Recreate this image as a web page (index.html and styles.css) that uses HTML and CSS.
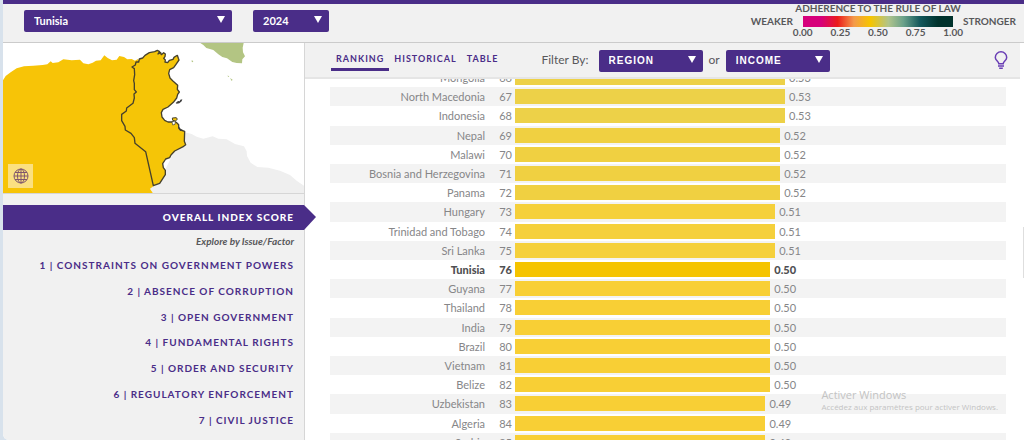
FILE: index.html
```html
<!DOCTYPE html>
<html lang="en">
<head>
<meta charset="utf-8">
<title>Rule of Law Index – Tunisia</title>
<link rel="stylesheet" href="styles.css">
</head>
<body>
<div class="app">
  <header class="topbar">
    <div class="pickers">
      <div class="select select-country"><select aria-label="Country"><option>Tunisia</option></select></div>
      <div class="select select-year"><select aria-label="Year"><option>2024</option></select></div>
    </div>
    <div class="legend">
      <span class="legend-end">WEAKER</span>
      <div class="legend-scale">
        <div class="legend-title">ADHERENCE TO THE RULE OF LAW</div>
        <div class="legend-bar"></div>
        <div class="legend-ticks"><span>0.00</span><span>0.25</span><span>0.50</span><span>0.75</span><span>1.00</span></div>
      </div>
      <span class="legend-end">STRONGER</span>
    </div>
  </header>

  <div class="body">
    <aside class="sidebar">
      <div class="map">
        <svg class="map-svg" viewBox="9 9 903 450" preserveAspectRatio="xMidYMid slice" role="img" aria-label="Map of Tunisia">
          <path fill="#efefef" d="M552 276L575 282L590 290L610 296L638 289L655 296L680 298L705 312L732 319L740 334L741 348L752 368L772 381L805 383L840 392L870 405L890 422L912 437V460H459L450 445L460 437L490 400Z"/>
          <path fill="#f7c407" d="M9 121L17 108L32 97L50 85L72 79L100 77L128 75L142 73L152 64L158 69L175 67L190 58L215 61L240 59L250 70L265 73L278 68L288 62L302 61L313 46L323 54L336 61L350 59L358 48L372 51L382 58L395 57L405 62L414 57L425 80L440 320L462 437L450 446L459 460H9Z"/>
          <path fill="#f5c507" stroke="#46412c" stroke-width="4" stroke-linejoin="round" d="M396 81L406 75L408 66L416 66L418 57L428 54L435 46L448 38L464 35L472 31L479 35L474 42L482 38L484 44L491 38L496 42L495 50L491 55L496 60L495 66L503 68L508 61L519 58L522 52L528 48L532 46L535 55L537 60L528 73L521 83L509 89L506 100L510 114L518 122L528 131L533 136L532 148L538 156L533 163L530 174L520 187L504 201L489 208L484 218L486 231L494 241L504 246L515 246L524 244L531 249L536 254L536 263L542 270L554 274L553 304L557 314L551 319L524 333L513 345L509 353L497 357L488 371L490 383L496 391V404L479 430L460 437L437 335L405 310L403 293L393 280L376 270L375 259L365 242V223L379 213L380 204L399 190L403 174L402 162L409 156L403 149V130L401 122L404 104L403 86Z"/>
          <path fill="#f5c507" stroke="#46412c" stroke-width="3" d="M517 234L529 233L532 238L526 243L518 241Z"/>
          <path fill="#fff" stroke="#46412c" stroke-width="2" d="M516 245L526 243L525 253L518 255Z"/>
          <path fill="#3e3e3e" d="M527 189L534 183L539 184L541 179L547 178L545 184L538 190L530 191ZM536 258L541 266L550 271L541 273L535 266Z"/>
          <path fill="#b3c583" d="M601 9H731L728 23L729 37L735 49L727 58L726 70L710 69L697 66L681 55L667 51L655 43L640 30L619 24L610 15ZM575 61L580 63L578 67L575 65ZM683 106L688 110L684 111ZM690 114L698 119L695 123Z"/>
        </svg>
        <button class="globe" type="button" aria-label="World view">
          <svg viewBox="0 0 16 16" width="16" height="16" fill="none" stroke="#80566d" stroke-width="1">
            <circle cx="8" cy="8" r="7"/><ellipse cx="8" cy="8" rx="3.5" ry="7"/><path d="M8 1V15M1 8H15M2 4.5H14M2 11.5H14"/>
          </svg>
        </button>
      </div>
      <nav class="factors">
        <a class="overall" href="#overall">OVERALL INDEX SCORE</a>
        <p class="hint">Explore by Issue/Factor</p>
        <div class="factor-list">
          <a class="factor" href="#f1">1 | CONSTRAINTS ON GOVERNMENT POWERS</a>
          <a class="factor" href="#f2">2 | ABSENCE OF CORRUPTION</a>
          <a class="factor" href="#f3">3 | OPEN GOVERNMENT</a>
          <a class="factor" href="#f4">4 | FUNDAMENTAL RIGHTS</a>
          <a class="factor" href="#f5">5 | ORDER AND SECURITY</a>
          <a class="factor" href="#f6">6 | REGULATORY ENFORCEMENT</a>
          <a class="factor" href="#f7">7 | CIVIL JUSTICE</a>
        </div>
      </nav>
    </aside>

    <main class="content">
      <div class="toolbar">
        <nav class="tabs">
          <a class="tab tab-active" href="#ranking">RANKING</a>
          <a class="tab" href="#historical">HISTORICAL</a>
          <a class="tab" href="#table">TABLE</a>
        </nav>
        <div class="filters">
          <span class="filter-label">Filter By:</span>
          <div class="select select-filter"><select aria-label="Region"><option>REGION</option></select></div>
          <span class="filter-or">or</span>
          <div class="select select-filter"><select aria-label="Income"><option>INCOME</option></select></div>
        </div>
        <button class="tips" type="button" aria-label="Insights">
          <svg viewBox="0 0 14 18" width="14" height="18" fill="none" stroke="#6a3fb5" stroke-width="1.5">
            <path d="M4.8 12.8C4.8 10.5 1.3 9.5 1.3 6.5A5.7 5.7 0 0 1 12.7 6.5C12.7 9.5 9.2 10.5 9.2 12.8ZM4 15H10M5.2 17.2H8.8"/>
          </svg>
        </button>
      </div>
      <div class="viewport">
        <ol class="ranking">
          <li class="row"><span class="name">Mongolia</span><span class="rank">66</span><span class="track"><span class="bar s53" style="width:55%"></span><span>0.53</span></span></li>
          <li class="row"><span class="name">North Macedonia</span><span class="rank">67</span><span class="track"><span class="bar s53" style="width:55%"></span><span>0.53</span></span></li>
          <li class="row"><span class="name">Indonesia</span><span class="rank">68</span><span class="track"><span class="bar s53" style="width:55%"></span><span>0.53</span></span></li>
          <li class="row"><span class="name">Nepal</span><span class="rank">69</span><span class="track"><span class="bar s52" style="width:54%"></span><span>0.52</span></span></li>
          <li class="row"><span class="name">Malawi</span><span class="rank">70</span><span class="track"><span class="bar s52" style="width:54%"></span><span>0.52</span></span></li>
          <li class="row"><span class="name">Bosnia and Herzegovina</span><span class="rank">71</span><span class="track"><span class="bar s52" style="width:54%"></span><span>0.52</span></span></li>
          <li class="row"><span class="name">Panama</span><span class="rank">72</span><span class="track"><span class="bar s52" style="width:54%"></span><span>0.52</span></span></li>
          <li class="row"><span class="name">Hungary</span><span class="rank">73</span><span class="track"><span class="bar s51" style="width:53%"></span><span>0.51</span></span></li>
          <li class="row"><span class="name">Trinidad and Tobago</span><span class="rank">74</span><span class="track"><span class="bar s51" style="width:53%"></span><span>0.51</span></span></li>
          <li class="row"><span class="name">Sri Lanka</span><span class="rank">75</span><span class="track"><span class="bar s51" style="width:53%"></span><span>0.51</span></span></li>
          <li class="row row-current"><span class="name">Tunisia</span><span class="rank">76</span><span class="track"><span class="bar" style="width:52%"></span><span>0.50</span></span></li>
          <li class="row"><span class="name">Guyana</span><span class="rank">77</span><span class="track"><span class="bar" style="width:52%"></span><span>0.50</span></span></li>
          <li class="row"><span class="name">Thailand</span><span class="rank">78</span><span class="track"><span class="bar" style="width:52%"></span><span>0.50</span></span></li>
          <li class="row"><span class="name">India</span><span class="rank">79</span><span class="track"><span class="bar" style="width:52%"></span><span>0.50</span></span></li>
          <li class="row"><span class="name">Brazil</span><span class="rank">80</span><span class="track"><span class="bar" style="width:52%"></span><span>0.50</span></span></li>
          <li class="row"><span class="name">Vietnam</span><span class="rank">81</span><span class="track"><span class="bar" style="width:52%"></span><span>0.50</span></span></li>
          <li class="row"><span class="name">Belize</span><span class="rank">82</span><span class="track"><span class="bar" style="width:52%"></span><span>0.50</span></span></li>
          <li class="row"><span class="name">Uzbekistan</span><span class="rank">83</span><span class="track"><span class="bar" style="width:51%"></span><span>0.49</span></span></li>
          <li class="row"><span class="name">Algeria</span><span class="rank">84</span><span class="track"><span class="bar" style="width:51%"></span><span>0.49</span></span></li>
          <li class="row"><span class="name">Serbia</span><span class="rank">85</span><span class="track"><span class="bar" style="width:51%"></span><span>0.49</span></span></li>
        </ol>
      </div>
    </main>
  </div>
  <div class="watermark">
    <div class="watermark-title">Activer Windows</div>
    <div class="watermark-text">Accédez aux paramètres pour activer Windows.</div>
  </div>
  <div class="scroll-thumb"></div>
</div>
</body>
</html>
```
FILE: styles.css
```css
* {
  box-sizing: border-box;
}

body {
  margin: 0;
  background: #d8e2ec;
  color: #58585b;
  font-family: Lato, "Liberation Sans", sans-serif;
}

a {
  color: inherit;
  text-decoration: none;
}

button {
  padding: 0;
  border: 0;
  background: none;
}

.app {
  position: relative;
  display: flex;
  flex-direction: column;
  height: 100vh;
  margin-left: 3px;
  overflow: hidden;
  border-radius: 0 0 0 6px;
  background: #fff;
}

/* Top bar */
.topbar {
  display: flex;
  flex: none;
  justify-content: space-between;
  height: 43px;
  padding: 0 8px 0 21px;
  border-top: 4px solid #4a2d88;
  border-bottom: 1px solid #cbcbcb;
  background: #f1f1f1;
}

.pickers {
  display: flex;
  gap: 21px;
  padding-top: 5px;
}

.select {
  position: relative;
  height: 22px;
}

.select::after {
  content: "";
  position: absolute;
  top: 7px;
  right: 7px;
  border: solid transparent;
  border-width: 7px 4px 0;
  border-top-color: #fff;
  pointer-events: none;
}

.select select {
  width: 100%;
  height: 100%;
  padding: 0 10px;
  appearance: none;
  border: 0;
  border-radius: 2px;
  background: #4a2d88;
  color: #fff;
  font: 700 11px Lato, sans-serif;
}

.select-country {
  width: 208px;
}

.select-year {
  width: 76px;
}

.select-filter {
  width: 104px;
}

.select-filter select {
  font: 700 10px "Liberation Sans", sans-serif;
  letter-spacing: 1px;
}

.legend {
  display: flex;
  gap: 10px;
  font-size: 10px;
  font-weight: 700;
  line-height: 10px;
}

.legend-end {
  padding-top: 12px;
}

.legend-scale {
  width: 150px;
}

.legend-title {
  display: flex;
  justify-content: center;
  height: 12px;
  line-height: 8px;
  white-space: nowrap;
}

.legend-bar {
  height: 11px;
  background: linear-gradient(90deg, #d6007b 12%, #eb1c1c 23%, #f49a4a 34%, #f6c500 45%, #b0c48b 57%, #6aa18a 67%, #13585c 78%, #00322c 90%);
}

.legend-ticks {
  display: grid;
  grid-template-columns: repeat(5, 1fr);
  margin: 0 -19px;
  text-align: center;
}

/* Sidebar */
.body {
  display: flex;
  flex: 1;
  min-height: 0;
}

.sidebar {
  flex: none;
  width: 302px;
  border-right: 1px solid #d6d6d6;
  background: #f1f1f1;
}

.map {
  position: relative;
  border-bottom: 1px solid #d6d6d6;
  background: #fff;
}

.map-svg {
  display: block;
  width: 100%;
}

.globe {
  position: absolute;
  bottom: 5px;
  left: 5px;
  display: grid;
  place-items: center;
  width: 25px;
  height: 24px;
  background: #fbe081;
}

.factors {
  display: flex;
  flex-direction: column;
  padding-top: 11px;
  text-align: right;
}

.overall {
  position: relative;
  padding-right: 10px;
  background: #4a2d88;
  color: #fff;
  font-size: 10px;
  font-weight: 900;
  letter-spacing: 1px;
  line-height: 25px;
}

.overall::after {
  content: "";
  position: absolute;
  top: 0;
  left: 100%;
  border-left: 12px solid #4a2d88;
  border-top: 12px solid transparent;
  border-bottom: 13px solid transparent;
}

.hint {
  margin: 0;
  padding: 0 10px;
  font-size: 10px;
  font-style: italic;
  font-weight: 700;
  line-height: 23px;
}

.factor-list {
  display: grid;
  grid-template-rows: repeat(7, 1fr);
  align-items: center;
  height: 180px;
}

.factor {
  padding: 0 10px;
  color: #4a2d88;
  font-size: 10px;
  font-weight: 700;
  letter-spacing: 1px;
  line-height: 25px;
}

/* Ranking panel */
.content {
  display: flex;
  flex: 1;
  flex-direction: column;
  min-width: 0;
}

.toolbar {
  display: flex;
  flex: none;
  align-items: center;
  height: 36px;
  margin-right: 4px;
  padding: 0 12px 0 26px;
  border-bottom: 2px solid #e5e5e5;
  background: #f1f1f1;
}

.tabs {
  display: flex;
  color: #4a2d88;
  font-size: 9px;
  font-weight: 700;
  letter-spacing: 1px;
}

.tab {
  padding: 0 5px;
  border-bottom: 3px solid transparent;
  line-height: 19px;
}

.tab-active {
  border-bottom-color: #4a2d88;
}

.filters {
  display: flex;
  align-items: center;
  margin-left: 38px;
  font-size: 12px;
  line-height: 22px;
}

.filter-label {
  margin-right: 10px;
}

.filter-or {
  margin: 0 6px;
}

.tips {
  display: grid;
  margin-left: auto;
}

.viewport {
  flex: 1;
  min-height: 0;
  overflow: hidden;
}

.ranking {
  display: grid;
  grid-template-rows: repeat(20, 1fr);
  height: 384px;
  margin: -11px 18px 0 25px;
  padding: 0;
  list-style: none;
}

.row {
  display: grid;
  grid-template-columns: 155px 27px 1fr;
  align-items: center;
  color: #868688;
  font-size: 11px;
  line-height: 19px;
}

.row:nth-child(even) {
  background: #f3f3f3;
}

.name,
.rank {
  text-align: right;
}

.track {
  display: flex;
  gap: 4px;
  align-items: center;
  margin-left: 3px;
}

.bar {
  height: 15px;
  background: #f8cf35;
}

.s53 {
  background: #edd148;
}

.s52 {
  background: #f0d041;
}

.s51 {
  background: #f5d03b;
}

.row-current {
  color: #4f4f52;
  font-weight: 900;
}

.row-current .bar {
  background: #f5c400;
}

/* Desktop overlay */
.watermark {
  position: absolute;
  right: 26px;
  bottom: 27px;
  color: #c3c3c3;
  font-family: "Open Sans", sans-serif;
  pointer-events: none;
}

.watermark-title {
  font-size: 11px;
  line-height: 13px;
}

.watermark-text {
  font-size: 8px;
  line-height: 12px;
}

.scroll-thumb {
  position: absolute;
  top: 227px;
  right: 0;
  width: 1px;
  height: 51px;
  background: #dedede;
}
```
